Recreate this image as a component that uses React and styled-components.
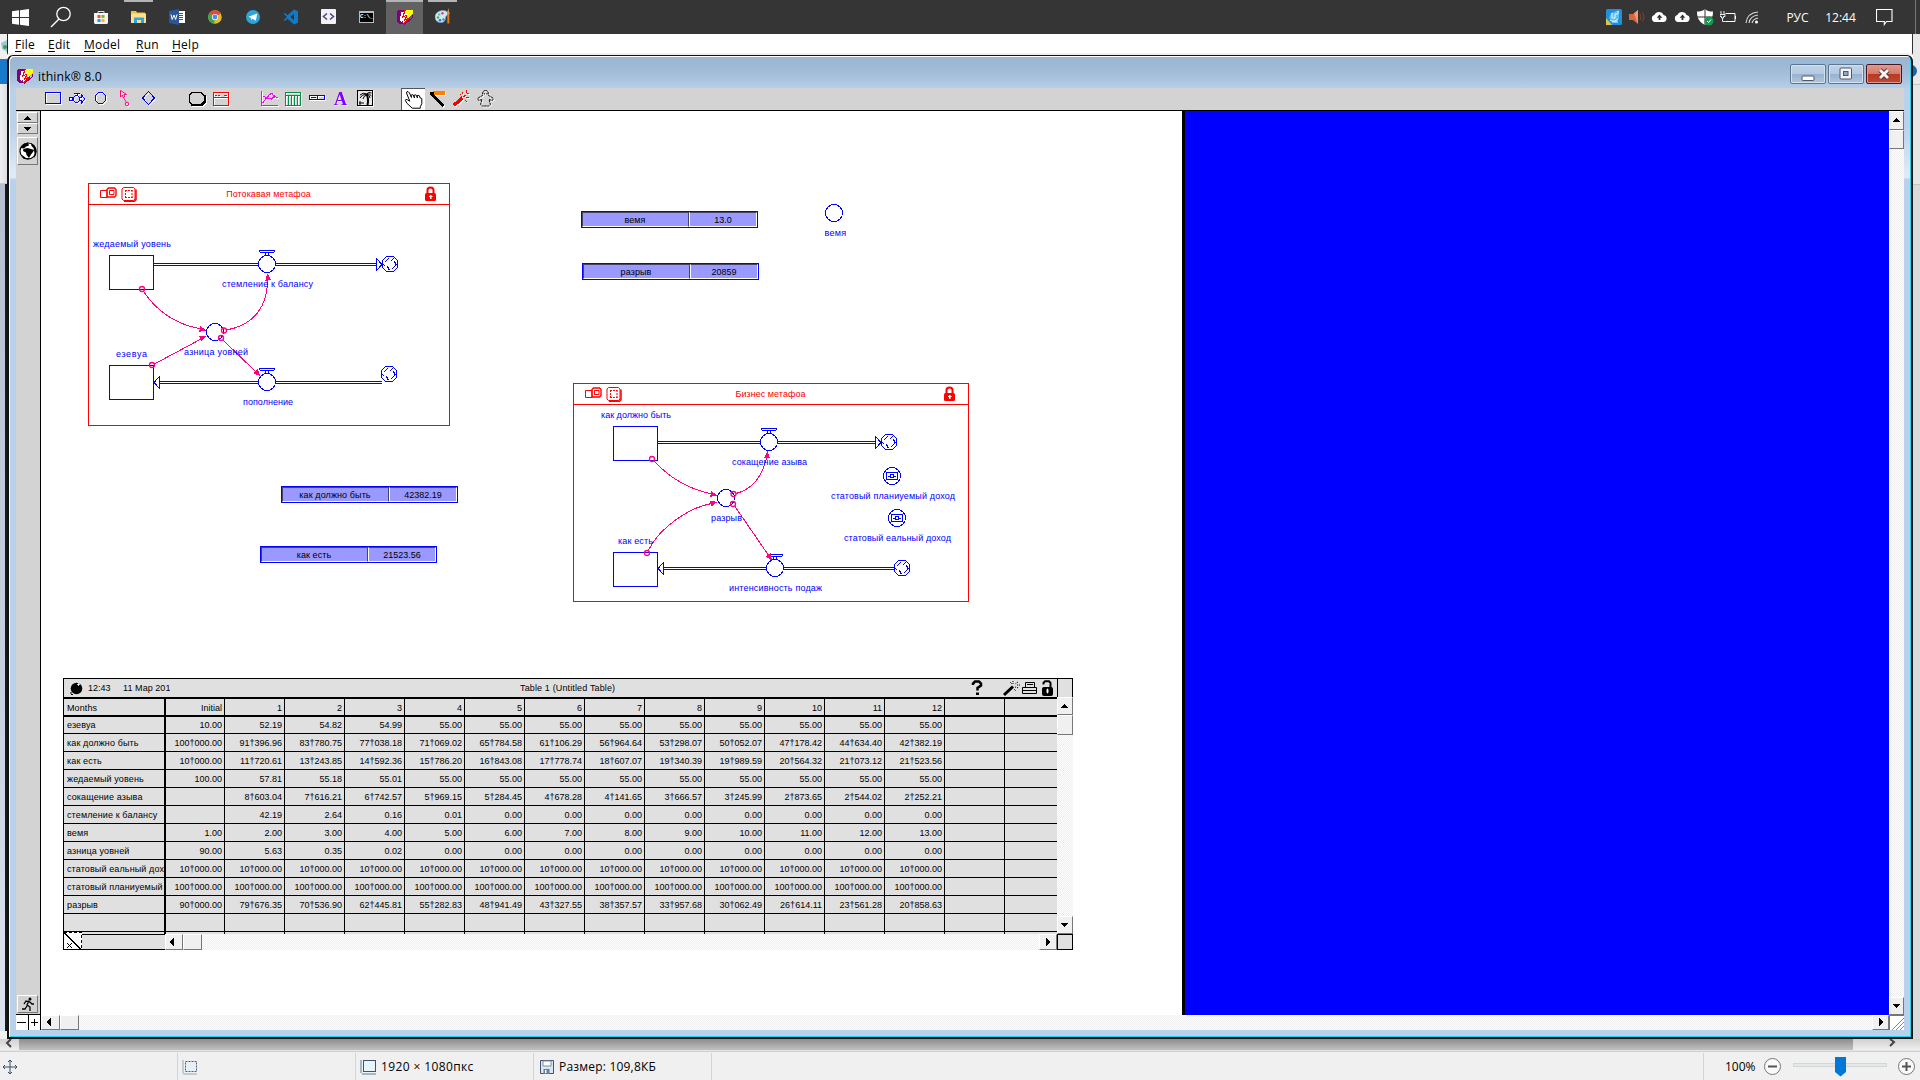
import React from 'react';
import styled, { createGlobalStyle, css } from 'styled-components';

const BLUE = '#0000ff';
const PINK = '#ff0080';
const RED = '#ff0000';

const Global = createGlobalStyle`
  *, *::before, *::after { box-sizing: border-box; }
  body { margin: 0; background: #f0f0f0; overflow: hidden; }
  svg { display: block; flex: none; }
`;

const uiFont = css`font-family: "Open Sans", "Noto Sans", sans-serif;`;
const smallFont = css`
  font-family: "Liberation Sans", Arial, sans-serif;
  font-size: 9px;
`;

/* ---------- shell ---------- */
const Screen = styled.div`
  width: 1920px;
  height: 1080px;
  display: flex;
  flex-direction: column;
  overflow: hidden;
  ${uiFont}
  font-size: 12px;
  color: #000;
`;

const Taskbar = styled.header`
  height: 34px;
  flex: none;
  display: flex;
  background: #353535;
  color: #fff;
`;
const StartSlot = styled.div`
  width: ${p => p.$w}px;
  display: flex;
  align-items: center;
  justify-content: center;
`;
const AppSlot = styled.div`
  width: 38px;
  display: flex;
  flex-direction: column;
  align-items: center;
  border-left: 1px solid ${p => (p.$active ? '#353535' : 'transparent')};
  background: ${p => (p.$active ? '#626262' : 'transparent')};
`;
const RunMark = styled.i`
  height: 2px;
  width: ${p => (p.$full ? 37 : 29)}px;
  margin-bottom: 6px;
  background: ${p => (p.$on ? '#b4b4b4' : 'transparent')};
`;
const Tray = styled.div`
  margin-left: auto;
  display: flex;
  align-items: center;
`;
const TraySlot = styled.div`
  width: 23px;
  display: flex;
  justify-content: center;
`;
const TrayText = styled.span`
  width: ${p => p.$w}px;
  padding-left: ${p => p.$pl || 0}px;
  text-align: center;
  font-size: 12px;
  line-height: 35px;
`;
const ShowDesktop = styled.div`
  width: 5px;
  height: 34px;
  margin-left: 2px;
  border-left: 1px solid #777;
`;

const Desk = styled.main`
  height: 1005px;
  flex: none;
  display: flex;
`;
const LeftEdge = styled.aside`
  width: 7px;
  display: flex;
  flex-direction: column;
  background: #f0f0f0;
  overflow: hidden;
`;
const EdgeBlock = styled.div`
  height: ${p => p.$h}px;
  flex: none;
  background: ${p => p.$bg};
  border-bottom: ${p => (p.$line ? '1px solid ' + p.$line : '0')};
  border-right: ${p => (p.$right ? '2px solid ' + p.$right : '0')};
  overflow: hidden;
`;
const RightEdge = styled(LeftEdge)`
  background: #e6e6e6;
`;

const AppFrame = styled.section`
  width: 1906px;
  display: flex;
  flex-direction: column;
  background: #fff;
`;
const MenuBar = styled.nav`
  height: 21px;
  flex: none;
  display: flex;
  padding-left: 7px;
  border-left: 1px solid #222;
  border-right: 1px solid #333;
  border-bottom: 2px solid #f0f0f0;
  line-height: 22px;
`;
const MenuItem = styled.span`
  width: ${p => p.$w}px;
  letter-spacing: 0.25px;
  u { text-underline-offset: 2px; }
`;

const Window = styled.div`
  flex: 1;
  display: flex;
  flex-direction: column;
  border: solid #111;
  border-width: 1px 2px 2px 2px;
  border-radius: 6px 6px 0 0;
  box-shadow: inset 1px 1px 0 #fff, inset -1px -1px 0 #25d3f0;
  padding: 1px 7px 7px 7px;
  background: linear-gradient(#99b4d1 0, #a4bdd9 18px, #b9d1ea 34px, #b9d1ea 70px, #dfeaf6 118px, #dfeaf6 122px, #b9d1ea 123px);
`;
const TitleBar = styled.div`
  height: 31px;
  flex: none;
  display: flex;
  align-items: center;
  padding: 7px 2px 0 1px;
  font-size: 12.3px;
`;
const TitleText = styled.span`
  margin-left: 5px;
  padding-top: 2px;
  line-height: 20px;
  flex: 1;
  letter-spacing: 0.1px;
`;
const Controls = styled.div`
  display: flex;
  gap: 2px;
  margin-top: -4px;
`;
const CtlButton = styled.div`
  width: 36px;
  height: 20px;
  border: 1px solid ${p => (p.$close ? '#4a1420' : '#5f7690')};
  border-radius: 2px;
  box-shadow: inset 0 0 0 1px ${p => (p.$close ? '#dc9a90' : '#d3e0ee')};
  background: ${p => p.$close
    ? 'linear-gradient(#e09a8e 0, #d27a6c 9px, #b83820 9px, #c04a32 100%)'
    : 'linear-gradient(#c0d3e8 0, #b4c9e0 9px, #98b1cd 9px, #b0c6df 100%)'};
  display: flex;
  align-items: center;
  justify-content: center;
`;

const ToolBar = styled.div`
  height: 23px;
  flex: none;
  display: flex;
  padding-left: 25px;
  background: #d3d3d3;
  border-bottom: 1px solid #000;
`;
const Tool = styled.div`
  width: 24px;
  height: 22px;
  margin-right: ${p => (p.$gap ? 24 : 0)}px;
  overflow: hidden;
  ${p => p.$on && css`
    background: #fff;
    border-left: 1px solid #555;
    border-top: 1px solid #555;
    svg { margin: -1px 0 0 -1px; }
  `}
  svg { ${p => !p.$on && css`filter: drop-shadow(1px 1px 0 #fff);`} }
`;

const Body = styled.div`
  height: 919px;
  display: flex;
`;
const SidePanel = styled.div`
  width: 25px;
  display: flex;
  flex-direction: column;
  background: #d3d3d3;
  border-right: 1px solid #000;
  padding-top: 1px;
`;
const bevel = css`
  border: 1px solid;
  border-color: #fff #777 #777 #fff;
  display: flex;
  align-items: center;
  justify-content: center;
`;
const SideButton = styled.div`
  ${bevel}
  width: 21px;
  margin: 0 0 ${p => p.$mb || 0}px 1px;
  height: ${p => p.$h}px;
  background: #d3d3d3;
`;
const ZoomPair = styled.div`
  height: 16px;
  display: flex;
  border-top: 1px solid #000;
  background: #fff;
`;
const ZoomCell = styled.div`
  flex: 1;
  display: flex;
  align-items: center;
  justify-content: center;
  & + & { border-left: 1px solid #000; }
`;
const Spacer = styled.div`flex: 1;`;

const MainCol = styled.div`
  width: 1863px;
  display: flex;
  flex-direction: column;
`;
const MainRow = styled.div`
  height: 904px;
  display: flex;
`;
const FootRow = styled.div`
  height: 15px;
  display: flex;
`;
const Canvas = styled.div`
  position: relative;
  width: 1141px;
  background: #fff;
  overflow: hidden;
`;
const BluePane = styled.div`
  flex: 1;
  background: ${BLUE};
  border-left: 3px solid #000;
`;
const track = css`
  background: repeating-conic-gradient(#ffffff 0 25%, #eeeeee 0 50%) 0 0 / 2px 2px;
`;
const VBar = styled.div`
  width: ${p => p.$w}px;
  display: flex;
  flex-direction: column;
  ${track}
`;
const HBar = styled.div`
  height: ${p => p.$h}px;
  flex: 1;
  display: flex;
  ${track}
`;
const Knob = styled.div`
  ${bevel}
  background: #f0f0f0;
  width: ${p => (p.$w ? p.$w + 'px' : '100%')};
  height: ${p => (p.$h ? p.$h + 'px' : '100%')};
  padding: 0 1px 1px 0;
  flex: none;
`;
const GripBox = styled.div`
  width: 15px;
  height: 15px;
  background: #fff;
  border-left: 1px solid #777;
  border-top: 1px solid #777;
`;

/* ---------- canvas items ---------- */
const place = css`
  position: absolute;
  left: ${p => p.$x - 41}px;
  top: ${p => p.$y - 111}px;
  width: ${p => p.$w}px;
  height: ${p => p.$h}px;
`;
const Sector = styled.div`
  ${place}
  border: 1px solid ${RED};
`;
const SectorHead = styled.div`
  height: 21px;
  display: flex;
  align-items: center;
  padding: 0 13px 0 11px;
  border-bottom: 1px solid ${RED};
  color: ${RED};
  ${smallFont}
`;
const SectorTitle = styled.span`
  flex: 1;
  text-align: center;
  line-height: 12px;
  letter-spacing: 0.05px;
  padding-right: 26px;
`;
const DiagramLayer = styled.svg`
  position: absolute;
  left: 0;
  top: 0;
  text { ${smallFont} fill: ${BLUE}; }
`;
const Meter = styled.div`
  ${place}
  display: flex;
  border: 1px solid ${BLUE};
  ${smallFont}
  text-align: center;
`;
const MeterLabel = styled.div`
  width: 107px;
  padding-right: 1px;
  letter-spacing: 0.1px;
  background: #9999ff;
  border: 1px solid;
  border-color: #444466 #444466 #fff #444466;
  line-height: 14px;
`;
const MeterValue = styled.div`
  flex: 1;
  background: #9999ff;
  border: 1px solid;
  border-color: #444466 #fff #fff #fff;
  line-height: 14px;
`;

/* ---------- table ---------- */
const TableBox = styled.div`
  ${place}
  display: flex;
  flex-direction: column;
  ${smallFont}
`;
const TableMain = styled.div`
  height: 256px;
  display: flex;
`;
const TableLeft = styled.div`
  width: 994px;
  background: #e0e0e0;
  border-left: 1px solid #000;
  border-top: 1px solid #000;
  overflow: hidden;
`;
const TableTitle = styled.div`
  height: 20px;
  display: flex;
  align-items: center;
  border-bottom: 2px solid #000;
  padding-left: 6px;
  line-height: 12px;
`;
const TitleCell = styled.span`
  width: ${p => p.$w}px;
  flex: none;
  padding-left: ${p => p.$pl || 0}px;
  white-space: nowrap;
  overflow: hidden;
  letter-spacing: ${p => p.$ls || 0}px;
`;
const Row = styled.div`
  display: flex;
  height: ${p => p.$h || 18}px;
  border-bottom: ${p => (p.$head ? 2 : 1)}px solid #000;
  line-height: ${p => (p.$h === 17 ? 16 : 18)}px;
`;
const NameCell = styled.div`
  width: 102px;
  flex: none;
  padding-left: 3px;
  border-right: 2px solid #000;
  white-space: nowrap;
  overflow: hidden;
  letter-spacing: 0.12px;
`;
const Cell = styled.div`
  width: ${p => p.$w || 60}px;
  flex: none;
  text-align: right;
  padding-right: 2px;
  border-right: ${p => (p.$last ? 0 : 1)}px solid #000;
`;
const CornerTop = styled.div`
  height: 19px;
  background: #e0e0e0;
  border: 1px solid #000;
  border-bottom: 0;
  flex: none;
`;
const TableFoot = styled.div`
  height: 16px;
  display: flex;
`;
const ResizeMark = styled.svg`
  margin-top: -2px;
`;
const FootLabel = styled.div`
  width: 83px;
  background: #e0e0e0;
  border-top: 1px solid #000;
  border-bottom: 1px solid #000;
`;
const FootCorner = styled.div`
  width: 16px;
  background: #e0e0e0;
  border: 1px solid #000;
`;

/* ---------- bottom of the image editor ---------- */
const PaintScroll = styled.div`
  height: 12px;
  flex: none;
  display: flex;
  background: linear-gradient(#d0d0d0, #efefef);
  border-bottom: 1px solid #e4e4e4;
`;
const PaintThumb = styled.div`
  width: 1834px;
  background: linear-gradient(#8e8e8e, #c0c0c0);
`;
const PaintArrow = styled.div`
  width: 19px;
  margin-left: ${p => p.$ml || 0}px;
`;
const StatusBar = styled.footer`
  height: 29px;
  flex: none;
  display: flex;
  align-items: stretch;
  background: #f0f0f0;
  border-top: 1px solid #d0d0d0;
  padding-top: 1px;
`;
const StatusCell = styled.div`
  width: ${p => p.$w}px;
  display: flex;
  align-items: center;
  padding-left: ${p => p.$pl}px;
  gap: 4px;
  border-right: 1px solid #d4d4d4;
  line-height: 27px;
  letter-spacing: ${p => p.$ls || 0}px;
`;
const ZoomArea = styled.div`
  margin-left: auto;
  width: 217px;
  display: flex;
  align-items: center;
  border-left: 1px solid #d4d4d4;
  padding-left: 21px;
`;
const ZoomText = styled.span`width: 37px;`;

/* ---------- small drawings ---------- */
const Arrow = ({ dir }) => {
  const d = {
    up: 'M4 0h1v1h1v1h1v1h1v1H1V3h1V2h1V1h1z',
    down: 'M1 0h7v1H7v1H6v1H5v1H4V3H3V2H2V1H1z',
    left: 'M5 0v8H4V7H3V6H2V5H1V3h1V2h1V1h1V0z',
    right: 'M3 0v8h1V7h1V6h1V5h1V3H6V2H5V1H4V0z',
  }[dir];
  const tall = dir === 'left' || dir === 'right';
  return <svg width="9" height={tall ? 8 : 4} shapeRendering="crispEdges"><path d={d} /></svg>;
};

const IThinkIcon = () => (
  <svg width="16" height="16" viewBox="0 0 16 16" shapeRendering="crispEdges">
    <path d="M1 1H7V3H4V12H6V15H2L0 12V3z" fill="#800080" />
    <path d="M4 3H6L5 13L3 12z" fill="#fff" />
    <path d="M7 1H14L13 10L6 15L5 9z" fill="#fff" />
    <path d="M9 1H16V5L12 8L10 6z" fill="#ffff00" />
    <path d="M8 1L6 8L10 6L8 11L13 9L6 15" stroke="#ff0000" strokeWidth="1.300" fill="none" />
    <path d="M15 6V9L9 14L7 16" stroke="#800080" strokeWidth="1" fill="none" />
    <path d="M11 5L10 9L14 5" stroke="#ffff00" fill="none" />
  </svg>
);

const PaintIcon = () => (
  <svg width="16" height="16" viewBox="0 0 16 16">
    <path d="M0 9C0 5 4 2.500 8 2.500c4 0 6 2.500 4.500 4.500-1 1-2 1-2 3 0 3-2 5-6 4.500C2 14 0 12 0 9z" fill="#cfe8f3" stroke="#6da7c4" strokeWidth=".6" />
    <circle cx="4.200" cy="6.500" r="1.200" fill="#6fb4dd" /><circle cx="7.500" cy="5.200" r="1.200" fill="#d64c3c" />
    <circle cx="3" cy="9.500" r="1.300" fill="#48b058" /><circle cx="5" cy="12.300" r="1.300" fill="#2d6fc0" /><circle cx="8.500" cy="11.500" r="1.200" fill="#2d8fd0" />
    <path d="M12.300 6h2v9.500h-2z" fill="#e8781a" /><path d="M11.800 6l1.500-6 1.500 6z" fill="#c99a5e" />
  </svg>
);

const taskIcons = {
  store: <svg width="16" height="18"><path d="M5 6V3.500h6V6" stroke="#ddd" fill="none" /><path d="M1 5h14v10l-1 1H2l-1-1z" fill="#f4f4f4" /><path d="M4.500 7h3v3h-3z" fill="#f35325" /><path d="M8.500 7h3v3h-3z" fill="#81bc06" /><path d="M4.500 11h3v3h-3z" fill="#05a6f0" /><path d="M8.500 11h3v3h-3z" fill="#ffba08" /></svg>,
  explorer: <svg width="16" height="18"><path d="M0 3h5l1 1.500h8V8H0z" fill="#f0bd45" /><path d="M0 5.500h15V15H0z" fill="#ffe08a" /><path d="M3 15V9.500h10V15h-3v-3H6v3z" fill="#2fa3e6" /></svg>,
  word: <svg width="16" height="18"><path d="M8 3h8v12H8z" fill="#fff" /><path d="M10 5.500h4M10 7.500h4M10 9.500h4M10 11.500h4" stroke="#2b579a" /><path d="M0 3l10-2v16L0 15z" fill="#2b579a" /><path d="M2 6.500l1.200 5L5 7l1.600 4.500L8 6.500" stroke="#fff" fill="none" /></svg>,
  chrome: <svg width="16" height="18"><circle cx="8" cy="9" r="6.800" fill="#e6b92a" /><path d="M8 9L2.100 5.600A6.800 6.800 0 0 1 13.900 5.600z" fill="#dd4b3e" /><path d="M8 9L2.100 5.600A6.800 6.800 0 0 0 7 15.700z" fill="#3da557" /><circle cx="8" cy="9" r="3.100" fill="#fff" /><circle cx="8" cy="9" r="2.400" fill="#4a8af4" /></svg>,
  telegram: <svg width="16" height="18"><circle cx="8" cy="9" r="7" fill="#2ea3dc" /><path d="M3.500 8.800L12.300 5.500 10.800 12.800 7.800 10.800 6.400 12 6 9.900z" fill="#fff" /></svg>,
  vscode: <svg width="16" height="18"><path d="M11 1.500L15 3.300V14.700L11 16.500L4.500 10.800L1.800 13 .5 12.200L4 9 .5 5.800L1.800 5l2.700 2.200zM11 5.800L7.200 9 11 12.200z" fill="#1279c4" /></svg>,
  dev: <svg width="16" height="18"><rect x="0" y="1" width="15" height="15" rx="1" fill="#f2f2f5" /><path d="M6 5.500L2.500 8.500 6 11.500M9 5.500l3.500 3L9 11.500" stroke="#4a4a86" strokeWidth="1.600" fill="none" /></svg>,
  ithink: <svg width="16" height="18" viewBox="0 -1 16 18"><IThinkIcon /></svg>,
  paint: <svg width="16" height="18" viewBox="0 0 16 18"><PaintIcon /></svg>,
};
const CmdIcon = styled.div`
  width: 15px;
  height: 12px;
  margin-top: 3px;
  background: #000;
  border: 1px solid #bdbdbd;
  border-top-width: 2px;
  color: #fff;
  font: bold 6px/8px "Liberation Mono", monospace;
  letter-spacing: -0.4px;
  overflow: hidden;
`;

const tasks = [
  ['store', 0], ['explorer', 1], ['word', 0], ['chrome', 0], ['telegram', 0],
  ['vscode', 0], ['dev', 0], ['cmd', 0], ['ithink', 1, 1], ['paint', 1],
];

const Cloud = () => (
  <svg width="17" height="16"><path d="M4 13a3.600 3.600 0 0 1-.6-7A5 5 0 0 1 12.600 6 3.600 3.600 0 0 1 13 13z" fill="#fff" /><path d="M8.500 5.500L5.700 8.700H7.600V11h1.800V8.700h1.900z" fill="#333" /></svg>
);

const TaskbarView = () => (
  <Taskbar>
    <StartSlot $w={40}>
      <svg width="17" height="17" viewBox="0 0 17 17"><path d="M0 2.300L7 1.300V8H0zM8 1.200L17 0V8H8zM0 9H7V15.700L0 14.700zM8 9H17V17L8 15.800z" fill="#fff" /></svg>
    </StartSlot>
    <StartSlot $w={41}>
      <svg width="22" height="22" viewBox="0 0 22 22"><circle cx="13.500" cy="8" r="6.700" fill="none" stroke="#fff" strokeWidth="1.300" /><path d="M9 13L1 21" stroke="#fff" strokeWidth="1.400" /></svg>
    </StartSlot>
    {tasks.map(([id, run, active]) => (
      <AppSlot key={id} $active={active}>
        <RunMark $on={run} $full={active} />
        {id === 'cmd' ? <CmdIcon>C:\_</CmdIcon> : taskIcons[id]}
      </AppSlot>
    ))}
    <Tray>
      <TraySlot><svg width="16" height="16"><rect width="16" height="16" rx="1.500" fill="#1e90dd" /><path d="M0 9l6 7H0z" fill="#e3c24a" /><path d="M3 9L5 4l3-1 5-2v8l-2 4-5 0z" fill="#5cc0f2" /><path d="M6 4v5h3V5h3V2M4 11q4 3 8-1M6 13h6" stroke="#e7f8ff" fill="none" /></svg></TraySlot>
      <TraySlot><svg width="16" height="16"><path d="M0 5h4l5-4v14l-5-4H0z" fill="#d9653f" /><path d="M5 4.500L9 1v14z" fill="#f39a76" /><path d="M11 5q2 3 0 6M13.500 3.500q3 4.500 0 9" stroke="#8d3d26" fill="none" /></svg></TraySlot>
      <TraySlot><Cloud /></TraySlot>
      <TraySlot><Cloud /></TraySlot>
      <TraySlot><svg width="17" height="17"><path d="M8 0C6 2 3 2.500 0 2.500 0 9 2 13 8 16c6-3 8-7 8-13.500C12 2.500 10 2 8 0z" fill="#fff" /><path d="M8 0v16M0 8h16" stroke="#333" /><circle cx="12" cy="12" r="4.500" fill="#109a4e" /><path d="M10 12l1.500 1.500L14 10.500" stroke="#fff" fill="none" /></svg></TraySlot>
      <TraySlot><svg width="17" height="16"><path d="M5.500 4.500H15V12.500H5.500M15.500 7v3" stroke="#fff" fill="none" /><path d="M1 2v3M4 2v3M0 5.500h5v2H3.500V9h-2V7.500H0zM2.500 9v3.500h3" stroke="#fff" fill="none" strokeWidth=".9" /></svg></TraySlot>
      <TraySlot><svg width="16" height="16"><path d="M2 14Q3 4 14 3M5 14Q6 7 14 6M8 14Q9 10 14 9" stroke="#ddd" strokeWidth="1.100" fill="none" /><circle cx="12.500" cy="13" r="1.500" fill="#fff" /></svg></TraySlot>
      <TrayText $w={62} $pl={7}>РУС</TrayText>
      <TrayText $w={31}>12:44</TrayText>
      <StartSlot $w={57}><svg width="17" height="17"><path d="M.5 .5H16V12.500H10.500L8.300 15.500V12.500H.5z" fill="none" stroke="#fff" strokeWidth="1.100" /></svg></StartSlot>
      <ShowDesktop />
    </Tray>
  </Taskbar>
);

/* toolbar drawings share one coordinate system; cx is the centre of each slot */
const tools = [
  [53, <rect x="45.500" y="92.500" width="15" height="11" fill="none" stroke={BLUE} />],
  [77, <g fill="none" stroke={BLUE}><path d="M69.500 97.500h3v3h-3zM80 97.500h1.500v-2.500l3.500 4-3.500 4v-2.500h-1.500M74 93.500h6M77 93.500v2" /><circle cx="76.500" cy="99" r="3.200" /></g>],
  [101, <circle cx="100.500" cy="98" r="5.500" fill="none" stroke={BLUE} />],
  [125, <g fill="none" stroke={PINK} shapeRendering="auto"><path d="M120.500 90.500v6.500l2-2 .5 2.500 1.500-.5-.5-2.500h2.500zM123.500 97.500l3 5" /><circle cx="127" cy="104" r="1.800" /></g>],
  [149, <path d="M148.500 91.500l6 6.500-6 6.500-6-6.500z" fill="none" stroke={BLUE} />, 1],
  [197, <g><path d="M192 92.500h9l3 3v6l-3 3h-9l-3-3v-6z" fill="#d3d3d3" stroke="#000" /><path d="M191 105h11l3-3v-7" stroke="#000" fill="none" strokeWidth="2" /></g>],
  [221, <path d="M213.500 92.500h15v13h-15zM213.500 97.500h15M215 95h2M218 95h2M224 95h3" fill="none" stroke={RED} />, 1],
  [269, <path d="M261.500 91v14.500h16M262.500 103l4-5 5 1 3-3 3 2M263 96l4 2 2-3 3-2 3 5" fill="none" stroke="#ff00ff" />],
  [293, <path d="M285.500 92.500h15v13h-15zM286 95.500h14M288.500 96v9M291.500 96v9M294.500 96v9M297.500 96v9" fill="none" stroke="#00904a" />],
  [317, <path d="M309.500 95.500h15v4h-15zM317.500 95v5M311 97.500h5" fill="none" stroke={BLUE} />],
  [341, <text x="340.500" y="105" textAnchor="middle" fontFamily="Liberation Serif, serif" fontSize="18" fontWeight="bold" fill="#8000ff">A</text>],
  [365, <g><rect x="357.500" y="90.500" width="15" height="15" fill="#e8e8e8" stroke="#000" strokeWidth="1.400" /><g shapeRendering="auto" stroke="#000" fill="none"><path d="M367.500 105Q369 99 366.500 94" strokeWidth="2" /><path d="M360 95q3-3 6.500-1M360 98q2-4 6-3.500M363 99q.5-3 3.500-4M371.500 93q-3-1.500-5 1M371.500 96q-2-3-5-2M370 98q0-3-3.500-4M359 103h5M360 101v4" /></g></g>, 1],
  [413, <path shapeRendering="auto" d="M406.500 93q0-1.700 1.500-1.500l1.500 1.500 2 4.500-.5-2q1-1.500 2.300-.5l1.200 3-.5-2.500q1-1.300 2.300-.3l1.200 2.800-.5-2q1-1.300 2.300-.3l1 2.500q1-.8 1.500.5v5l-1.500 3v1.500h-8l-5.500-5-1.500-3q.5-1.500 2-.5l2.500 1.500z" fill="#fff" stroke="#000" />, 0, 1],
  [437, <g><path d="M433 91h12v4h-12z" fill="#ff8000" /><path d="M430 92h4v3l2 2 8 8-1.500 1.500-8.500-7.500-4-4z" fill="#000" /></g>],
  [461, <g><path d="M453.500 104l8-7 1.500 2-8 7z" fill={RED} stroke={RED} /><path d="M463 97l3-2M462 92l1 2M466 90v3M469 93l-2 1M466 97l3 1M465 100l2 2M460 94l1 1" stroke={RED} /></g>],
  [485, <path shapeRendering="auto" d="M485.500 90.500c2.500 0 3 2 3 5l4.500 2.500q.5 2-1 2.500l-3-1 1.500 5-2 1.500h-6l-2-1.500 1.500-5-3 1q-1.500-.5-1-2.500l4.500-2.500c0-3 .5-5 3-5zM484.300 93v1.500M487 93v1.500" fill="none" stroke="#111" strokeDasharray="2.500 .5" />],
];

/* ---------- diagram primitives ---------- */
const Stock = ({ x, y }) => <rect x={x + 0.5} y={y + 0.5} width="44" height="34" fill="#fff" stroke={BLUE} />;
const Ring = ({ x, y }) => <circle cx={x} cy={y} r="8.500" fill="#fff" stroke={BLUE} />;
const Valve = ({ x, y }) => (
  <g fill="#fff" stroke={BLUE}>
    <path d={`M${x - 1.500} ${y - 12}v4h3v-4`} />
    <path d={`M${x - 7.500} ${y - 13.500}h15v1l-1 1h-13l-1-1z`} />
    <circle cx={x} cy={y} r="8.500" />
  </g>
);
const Pipe = ({ x1, x2, y }) => <path d={`M${x1} ${y + 0.5}H${x2}M${x1} ${y + 2.5}H${x2}`} stroke={BLUE} />;
const Head = ({ x, y, left }) => (
  <path d={left ? `M${x} ${y}l5.500 -6v12z` : `M${x} ${y}l-5.500 -6v12z`} fill="#fff" stroke={BLUE} />
);
const Sink = ({ x, y }) => (
  <path
    transform={`translate(${x} ${y})`}
    fill="#fff" stroke={BLUE}
    d="M4.500 .5H11.500L15.500 4.500V11.500L11.500 15.500H4.500L.5 11.500V4.500zM2.500 6.500L6.500 2.500M8.500 5.500L12.500 1.500M12.500 5.500L14.500 9.500M.5 7.500L3.500 10.500M5.500 10.500L7.500 14.500M9.500 13.500L13.500 9.500"
  />
);
const Dot = ({ x, y }) => <circle cx={x} cy={y} r="2.500" fill="none" stroke={PINK} strokeWidth="1.300" shapeRendering="auto" />;
const Wire = ({ d }) => <path d={d} fill="none" stroke={PINK} />;
const Tip = ({ x, y, a }) => <path d="M0 0L-7 -3V3z" fill={PINK} transform={`translate(${x} ${y}) rotate(${a})`} />;
const Param = ({ x, y }) => (
  <g fill="none" stroke={BLUE}>
    <circle cx={x} cy={y} r="8.500" />
    <rect x={x - 5.5} y={y - 3.5} width="11" height="7" />
    <path d={`M${x - 4} ${y}h2M${x + 2} ${y}h2M${x - 1.500} ${y - 1.500}h3v3h-3z`} />
  </g>
);
const Label = ({ x1, x2, y, children }) => (
  <text x={x1} y={y} textLength={x2 - x1} lengthAdjust="spacing">{children}</text>
);

const Diagram = () => (
  <DiagramLayer width="1141" height="904" viewBox="41 111 1141 904">
    <g shapeRendering="crispEdges">
      <Stock x={109} y={255} /><Stock x={109} y={365} />
      <Pipe x1={154} x2={376} y={263} /><Valve x={267} y={264} /><Head x={382} y={264.5} /><Sink x={382} y={256} />
      <Pipe x1={159} x2={382} y={381} /><Valve x={267} y={382} /><Head x={154} y={382.5} left /><Sink x={381} y={366} />
      <Ring x={215} y={332} />
      <Wire d="M143.500 291.500Q164 322 201 329" /><Tip x={206.5} y={330.5} a={12} /><Dot x={142} y={289} />
      <Wire d="M226.500 330C255 325 268 305 267.500 279" /><Tip x={267.5} y={273.5} a={-95} /><Dot x={224} y={330.5} />
      <Wire d="M223 340L256 372" /><Tip x={260.5} y={376} a={43} /><Dot x={221} y={338} />
      <Wire d="M154.500 364L201 339" /><Tip x={206.5} y={335.5} a={-28} /><Dot x={152} y={365} />

      <Stock x={613} y={426} /><Stock x={613} y={552} />
      <Pipe x1={658} x2={875} y={441} /><Valve x={769} y={442} /><Head x={881} y={442.5} /><Sink x={881} y={434} />
      <Pipe x1={663} x2={894} y={567} /><Valve x={775} y={568} /><Head x={658} y={568.5} left /><Sink x={894} y={560} />
      <Ring x={726} y={498} />
      <Wire d="M654 461Q678 487 712 494" /><Tip x={717.5} y={495.5} a={12} /><Dot x={652} y={459} />
      <Wire d="M736 493.500C757 488 764 470 767 456" /><Tip x={767.5} y={451} a={-85} /><Dot x={733.5} y={494} />
      <Wire d="M735 506.500L769 556" /><Tip x={772} y={560.5} a={56} /><Dot x={733} y={504} />
      <Wire d="M648.500 550C660 527 690 507 712 503.500" /><Tip x={717.5} y={502} a={-12} /><Dot x={647} y={553} />
      <Param x={892} y={476} /><Param x={897} y={518} />
      <Ring x={834} y={213} />
    </g>
    <Label x1={93} x2={171} y={247}>жедаемый уовень</Label>
    <Label x1={222} x2={313} y={287}>стемление к балансу</Label>
    <Label x1={184} x2={248} y={355}>азница уовней</Label>
    <Label x1={116} x2={147} y={357}>езевуа</Label>
    <Label x1={243} x2={293} y={405}>пополнение</Label>
    <Label x1={601} x2={671} y={418}>как должно быть</Label>
    <Label x1={732} x2={807} y={465}>сокащение азыва</Label>
    <Label x1={831} x2={955} y={499}>статовый планиуемый доход</Label>
    <Label x1={844} x2={951} y={541}>статовый еальный доход</Label>
    <Label x1={711} x2={742} y={521}>разрыв</Label>
    <Label x1={618} x2={653} y={544}>как есть</Label>
    <Label x1={729} x2={822} y={591}>интенсивность подаж</Label>
    <Label x1={824.5} x2={846} y={236}>вемя</Label>
  </DiagramLayer>
);

const SectorView = ({ title, ...pos }) => (
  <Sector {...pos}>
    <SectorHead>
      <svg width="38" height="16" fill="none" stroke={RED}>
        <path d="M.5 4.500h6.500v7h-6.500z" />
        <path d="M7 11h7.500l1.500-1.500V3.500l-1.500-1.500H8.500L7 3.500z" strokeWidth="1.400" /><path d="M9.500 4.500h4.500v4h-4.500z" />
        <path d="M23.500 1.500h10l1.500 1.500v10l-1.500 1.500h-10l-1.500-1.500v-10z" />
        <path d="M24 15.200h10.500l1.500-1.500V3.500" strokeWidth="1.500" />
        <path d="M25 4.500h7.500M25 11.500h7.500M25.500 4v8M32 4v8" strokeDasharray="2 1" />
      </svg>
      <SectorTitle>{title}</SectorTitle>
      <svg width="11" height="16"><path d="M2.500 8V4q0-2.500 3-2.500t3 2.500v4" stroke={RED} strokeWidth="2" fill="none" /><rect y="7" width="11" height="8" rx="1.500" fill={RED} /><path d="M5 9h1.500v4H5zM4 10h3.500v1H4z" fill="#fff" /></svg>
    </SectorHead>
  </Sector>
);

const meters = [
  ['вемя', '13.0', 581, 211],
  ['разрыв', '20859', 582, 263],
  ['как должно быть', '42382.19', 281, 486],
  ['как есть', '21523.56', 260, 546],
];

const z = (v, n) => Array(n).fill(v);
const rows = [
  ['езевуа', '10.00', '52.19', '54.82', '54.99', ...z('55.00', 9)],
  ['как должно быть', '100†000.00', '91†396.96', '83†780.75', '77†038.18', '71†069.02', '65†784.58', '61†106.29', '56†964.64', '53†298.07', '50†052.07', '47†178.42', '44†634.40', '42†382.19'],
  ['как есть', '10†000.00', '11†720.61', '13†243.85', '14†592.36', '15†786.20', '16†843.08', '17†778.74', '18†607.07', '19†340.39', '19†989.59', '20†564.32', '21†073.12', '21†523.56'],
  ['жедаемый уовень', '100.00', '57.81', '55.18', '55.01', ...z('55.00', 9)],
  ['сокащение азыва', '', '8†603.04', '7†616.21', '6†742.57', '5†969.15', '5†284.45', '4†678.28', '4†141.65', '3†666.57', '3†245.99', '2†873.65', '2†544.02', '2†252.21'],
  ['стемление к балансу', '', '42.19', '2.64', '0.16', '0.01', ...z('0.00', 8)],
  ['вемя', '1.00', '2.00', '3.00', '4.00', '5.00', '6.00', '7.00', '8.00', '9.00', '10.00', '11.00', '12.00', '13.00'],
  ['азница уовней', '90.00', '5.63', '0.35', '0.02', ...z('0.00', 9)],
  ['статовый еальный дох', ...z('10†000.00', 13)],
  ['статовый планиуемый', ...z('100†000.00', 13)],
  ['разрыв', '90†000.00', '79†676.35', '70†536.90', '62†445.81', '55†282.83', '48†941.49', '43†327.55', '38†357.57', '33†957.68', '30†062.49', '26†614.11', '23†561.28', '20†858.63'],
  ['', ...z('', 13)],
  ['', ...z('', 13)],
];

const DataRow = ({ cells, h, head }) => (
  <Row $h={h} $head={head}>
    <NameCell>{cells[0]}</NameCell>
    {cells.slice(1).map((c, i) => <Cell key={i} $w={i === 0 ? 59 : 60}>{c}</Cell>)}
    <Cell /><Cell $w={52} $last />
  </Row>
);

const TableView = () => (
  <TableBox $x={63} $y={678} $w={1010} $h={272}>
    <TableMain>
      <TableLeft>
        <TableTitle>
          <svg width="13" height="14"><circle cx="6.500" cy="7.500" r="5.800" /><path d="M7 3.500h3M8.500 2v3" stroke="#fff" strokeWidth=".8" /><path d="M0 12h2M1 13.500h2" stroke="#000" /></svg>
          <TitleCell $w={35} $pl={5}>12:43</TitleCell>
          <TitleCell $w={52} $pl={5} $ls={0.05}>11 Мар 201</TitleCell>
          <TitleCell $w={801} $pl={350} $ls={0.14}>Table 1 (Untitled Table)</TitleCell>
          <svg width="82" height="18">
            <path d="M2 6V4.500l2-2h4l2 2v2L6.500 9v2.500" fill="none" stroke="#000" strokeWidth="2.500" /><path d="M5 13.500h3v2.500H5z" />
            <path d="M33 16l9-8.500" stroke="#000" strokeWidth="3" /><path d="M42 2v3M47 3l-3 2M44 8l4 1M43 10l2 2M39 3l2 2M46 6h3" stroke="#000" strokeDasharray="1 1" />
            <path d="M54.500 8V3.500h9V8M51.500 8.500h14v6h-14zM52 11.500h14M56 5.500h6" fill="none" stroke="#000" />
            <path d="M72.500 5.500V3.800l1.500-1.500h4l1.500 1.500V9" fill="none" stroke="#000" strokeWidth="2" /><rect x="71" y="8" width="11" height="9" rx="2" /><path d="M76 10h1v4h-1zM75 12h3" fill="#fff" stroke="#fff" strokeWidth=".6" />
          </svg>
        </TableTitle>
        <DataRow head h={18} cells={['Months', 'Initial', 1, 2, 3, 4, 5, 6, 7, 8, 9, 10, 11, 12]} />
        {rows.map((r, i) => <DataRow key={i} h={i === 0 ? 17 : 18} cells={r} />)}
      </TableLeft>
      <VBar $w={16}>
        <CornerTop />
        <Knob $h={18}><Arrow dir="up" /></Knob>
        <Knob $h={20} />
        <Spacer />
        <Knob $h={18}><Arrow dir="down" /></Knob>
      </VBar>
    </TableMain>
    <TableFoot>
      <ResizeMark width="19" height="18" shapeRendering="crispEdges">
        <path d="M0 0h19v18H0z" fill="#fff" /><path d="M.5 0v17.500H18.500M1 .5l17 17" stroke="#000" fill="none" />
        <path d="M1 .5H18.500V18" stroke="#000" fill="none" strokeDasharray="3 2" /><path d="M4 11l5 5M9 11l-5 5" stroke="#000" />
      </ResizeMark>
      <FootLabel />
      <HBar $h={16}>
        <Knob $w={18}><Arrow dir="left" /></Knob>
        <Knob $w={19} />
        <Spacer />
        <Knob $w={18}><Arrow dir="right" /></Knob>
      </HBar>
      <FootCorner />
    </TableFoot>
  </TableBox>
);

const Globe = () => (
  <svg width="18" height="20" viewBox="0 0 18 20">
    <circle cx="9" cy="10" r="8" fill="#fff" stroke="#000" strokeWidth="1.200" />
    <path d="M4.500 8l4-1 3.500 1 3 1-1 2-2 2.500-2 3.500-2.500-3-.5-2.500-3-1.500zM1.500 7l3-4 4.500-1.500 1 3-3 1-2 2zM12 2l3.500 2.500 2 5.500-.5 4-2 3 .5-5-1-5-2-2zM3 14l4 3 5 .5-3 1-5-1z" />
  </svg>
);

export default function App() {
  return (
    <Screen>
      <Global />
      <TaskbarView />
      <Desk>
        <LeftEdge>
          <EdgeBlock $h={25} $bg="#f0f0f0"><svg width="7" height="25"><path d="M1 9l6-3v12l-5-3z" fill="#9fc6d8" /><circle cx="5" cy="13" r="2" fill="#3aa04a" /></svg></EdgeBlock>
          <EdgeBlock $h={25} $bg="#1979ca" />
          <EdgeBlock $h={100} $bg="linear-gradient(90deg, #eeeff1, #dcdee2)" $line="#c8c8c8" />
          <EdgeBlock $h={847} $bg="linear-gradient(#b6bfd0, #c6d1e0 60%, #dbe4ee)" $right="#1a1a1a" />
        </LeftEdge>
        <AppFrame>
          <MenuBar>
            <MenuItem $w={33}><u>F</u>ile</MenuItem>
            <MenuItem $w={36}><u>E</u>dit</MenuItem>
            <MenuItem $w={52}><u>M</u>odel</MenuItem>
            <MenuItem $w={36}><u>R</u>un</MenuItem>
            <MenuItem $w={40}><u>H</u>elp</MenuItem>
          </MenuBar>
          <Window>
            <TitleBar>
              <IThinkIcon />
              <TitleText>ithink® 8.0</TitleText>
              <Controls>
                <CtlButton><svg width="14" height="16"><rect x="1" y="10" width="12" height="4.500" rx="1" fill="#fff" stroke="#4c5a70" /></svg></CtlButton>
                <CtlButton><svg width="14" height="14"><rect x="1" y="1" width="11.500" height="11" rx="1" fill="#f4f4f4" stroke="#4c5a70" /><rect x="4.500" y="4.500" width="4.500" height="4" fill="#8fa9c6" stroke="#4c5a70" /></svg></CtlButton>
                <CtlButton $close><svg width="14" height="12"><path d="M3 2l8 8M11 2l-8 8" stroke="#5a3038" strokeWidth="4.600" /><path d="M3 2l8 8M11 2l-8 8" stroke="#f6f6f6" strokeWidth="2.900" /></svg></CtlButton>
              </Controls>
            </TitleBar>
            <ToolBar>
              {tools.map(([cx, art, gap, on]) => (
                <Tool key={cx} $gap={gap} $on={on}>
                  <svg width="24" height="22" viewBox={`${cx - 12} 88 24 22`} shapeRendering={cx === 341 ? 'auto' : 'crispEdges'}>{art}</svg>
                </Tool>
              ))}
            </ToolBar>
            <Body>
              <SidePanel>
                <SideButton $h={11}><Arrow dir="up" /></SideButton>
                <SideButton $h={11} $mb={3}><Arrow dir="down" /></SideButton>
                <SideButton $h={28}><Globe /></SideButton>
                <Spacer />
                <SideButton $h={18} $mb={1}>
                  <svg width="13" height="15"><path d="M8 3.500L6 8l3 2 0 4M6 9l-2 3H1M3 7l2-3 4 1 2 2h2" stroke="#000" strokeWidth="1.300" fill="none" /><circle cx="9" cy="2" r="1.500" /></svg>
                </SideButton>
                <ZoomPair>
                  <ZoomCell><svg width="9" height="9" shapeRendering="crispEdges"><path d="M0 4h9v1H0z" /></svg></ZoomCell>
                  <ZoomCell><svg width="9" height="9" shapeRendering="crispEdges"><path d="M1 4h7v1H1zM4 1h1v7H4z" /></svg></ZoomCell>
                </ZoomPair>
              </SidePanel>
              <MainCol>
                <MainRow>
                  <Canvas>
                    <SectorView title="Потокавая метафоа" $x={88} $y={183} $w={362} $h={243} />
                    <SectorView title="Бизнес метафоа" $x={573} $y={383} $w={396} $h={219} />
                    <Diagram />
                    {meters.map(([name, value, x, y]) => (
                      <Meter key={name} $x={x} $y={y} $w={177} $h={17}>
                        <MeterLabel>{name}</MeterLabel>
                        <MeterValue>{value}</MeterValue>
                      </Meter>
                    ))}
                    <TableView />
                  </Canvas>
                  <BluePane />
                  <VBar $w={15}>
                    <Knob $h={19}><Arrow dir="up" /></Knob>
                    <Knob $h={19} />
                    <Spacer />
                    <Knob $h={18}><Arrow dir="down" /></Knob>
                  </VBar>
                </MainRow>
                <FootRow>
                  <HBar $h={15}>
                    <Knob $w={19}><Arrow dir="left" /></Knob>
                    <Knob $w={19} />
                    <Spacer />
                    <Knob $w={17}><Arrow dir="right" /></Knob>
                  </HBar>
                  <GripBox><svg width="14" height="14"><path d="M2 14L14 2M6 14L14 6M10 14L14 10" stroke="#888" fill="none" /></svg></GripBox>
                </FootRow>
              </MainCol>
            </Body>
          </Window>
        </AppFrame>
        <RightEdge>
          <EdgeBlock $h={51} $bg="#e9e9e9" $line="#c4c4c4"><svg width="7" height="50"><circle cx="-2" cy="37" r="6" fill="#1565b5" /></svg></EdgeBlock>
          <EdgeBlock $h={100} $bg="#e6e6e6" $line="#c4c4c4" />
          <EdgeBlock $h={854} $bg="#dadada" />
        </RightEdge>
      </Desk>
      <PaintScroll>
        <PaintArrow><svg width="19" height="11"><path d="M11 0L7 4l4 4" stroke="#444" strokeWidth="2" fill="none" /></svg></PaintArrow>
        <PaintThumb />
        <PaintArrow $ml={32}><svg width="19" height="11"><path d="M5 0l4 3-4 4" stroke="#444" strokeWidth="2" fill="none" /></svg></PaintArrow>
      </PaintScroll>
      <StatusBar>
        <StatusCell $w={178} $pl={2}><svg width="16" height="16"><path d="M8 1v14M1 8h14M6 3l2-2 2 2M6 13l2 2 2-2M3 6L1 8l2 2M13 6l2 2-2 2" stroke="#34506e" fill="none" /></svg></StatusCell>
        <StatusCell $w={178} $pl={4}><svg width="17" height="16"><rect x="3.500" y="2.500" width="11" height="10" fill="#e9eff6" stroke="#4a6078" strokeDasharray="2 1" /><path d="M1 1v13M1 15h14" stroke="#93a7bd" /></svg></StatusCell>
        <StatusCell $w={178} $pl={4} $ls={0.38}><svg width="17" height="16"><rect x="3.500" y="1.500" width="12" height="11" fill="#e8f4fb" stroke="#3c5470" /><path d="M1 1v13M2 15h14" stroke="#8aa2bd" strokeWidth="1.500" /></svg><span>1920 × 1080пкс</span></StatusCell>
        <StatusCell $w={178} $pl={5} $ls={0.2}><svg width="16" height="16"><path d="M1.500 1.500h13v13h-13z" fill="#dbe6f1" stroke="#42566e" /><path d="M4 2h8v5H4z" fill="#fff" stroke="#7b90a8" /><path d="M4.500 10h6v5h-6z" fill="#64809e" /><path d="M6 11h1.500v3H6z" fill="#fff" /></svg><span>Размер: 109,8КБ</span></StatusCell>
        <ZoomArea>
          <ZoomText>100%</ZoomText>
          <svg width="155" height="24" viewBox="1762 1054 155 24">
            <circle cx="1772.500" cy="1065.500" r="8" fill="#fafafa" stroke="#777" /><path d="M1768 1065.500h9" stroke="#555" strokeWidth="2" />
            <rect x="1793.500" y="1062.500" width="93" height="3" fill="#e4e8e8" stroke="#d2d6d6" />
            <path d="M1835 1056h11v15l-5.500 4.500-5.500-4.500z" fill="#0078d7" />
            <circle cx="1906.500" cy="1065.500" r="8" fill="#fafafa" stroke="#777" /><path d="M1902 1065.500h9M1906.500 1061v9" stroke="#555" strokeWidth="2" />
          </svg>
        </ZoomArea>
      </StatusBar>
    </Screen>
  );
}
